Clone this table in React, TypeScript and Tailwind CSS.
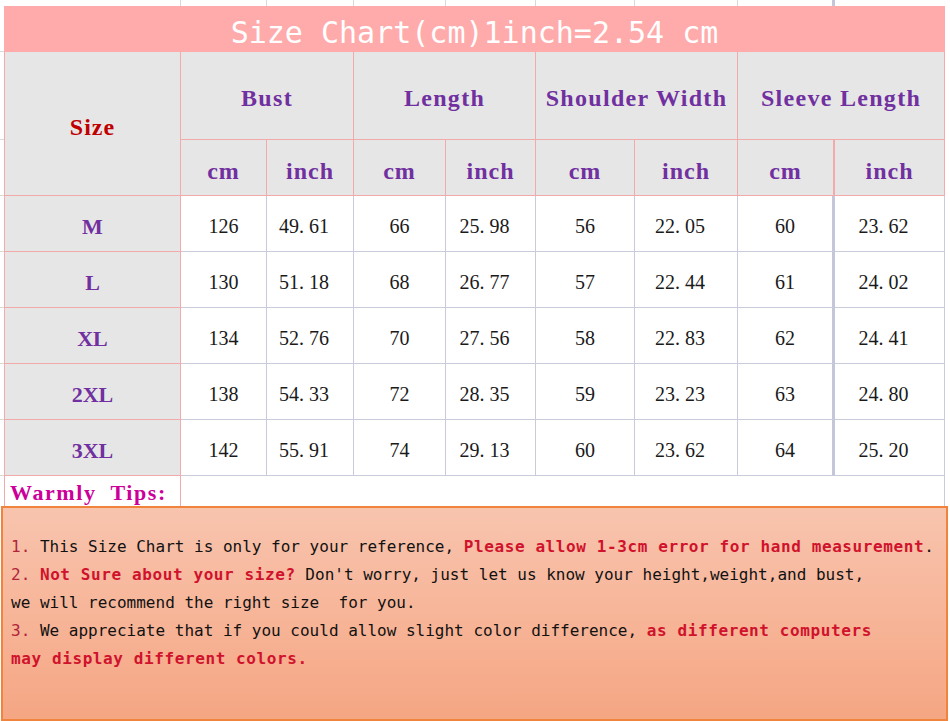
const rows = [
  { size: "M", v: ["126", "49.61", "66", "25.98", "56", "22.05", "60", "23.62"] },
  { size: "L", v: ["130", "51.18", "68", "26.77", "57", "22.44", "61", "24.02"] },
  { size: "XL", v: ["134", "52.76", "70", "27.56", "58", "22.83", "62", "24.41"] },
  { size: "2XL", v: ["138", "54.33", "72", "28.35", "59", "23.23", "63", "24.80"] },
  { size: "3XL", v: ["142", "55.91", "74", "29.13", "60", "23.62", "64", "25.20"] },
];

const groups = ["Bust", "Length", "Shoulder Width", "Sleeve Length"];

// numbers are drawn with a half-width period, like the original sheet font
function Num({ text }: { text: string }) {
  const [a, b] = text.split(".");
  if (b === undefined) return <span>{a}</span>;
  return (
    <span className="pr-[12px]">
      {a}
      <span className="inline-block w-[10px]">.</span>
      {b}
    </span>
  );
}

export default function App() {
  return (
    <div className="w-[950px] h-[721px] bg-white overflow-hidden font-['Liberation_Serif',serif]">
      {/* spreadsheet strip above the chart */}
      <div className="flex h-[6px] pl-[4px]">
        <div className="w-[177px] border-r border-[#d9d9d9]" />
        <div className="w-[86px] border-r border-[#d9d9d9]" />
        <div className="w-[87px] border-r border-[#d9d9d9]" />
        <div className="w-[92px] border-r border-[#d9d9d9]" />
        <div className="w-[90px] border-r border-[#d9d9d9]" />
        <div className="w-[99px] border-r border-[#d9d9d9]" />
        <div className="w-[103px] border-r border-[#d9d9d9]" />
        <div className="w-[97px] border-r-[3px] border-[#c3c7d9]" />
      </div>

      <div className="flex">
        {/* left margin grid lines */}
        <div className="w-[4px] flex flex-col">
          <div className="h-[46px] border-b border-[#d9d9d9]" />
          <div className="h-[88px] border-b border-[#d9d9d9]" />
          <div className="h-[56px] border-b border-[#d9d9d9]" />
          <div className="h-[56px] border-b border-[#d9d9d9]" />
          <div className="h-[56px] border-b border-[#d9d9d9]" />
          <div className="h-[56px] border-b border-[#d9d9d9]" />
          <div className="h-[56px] border-b border-[#d9d9d9]" />
          <div className="h-[56px] border-b border-[#d9d9d9]" />
        </div>

        <div className="w-[941px]">
          {/* title */}
          <div className="h-[46px] bg-[#ffabab] flex items-center justify-center pt-[6px] text-white text-[30px] font-['DejaVu_Sans_Mono',monospace] whitespace-pre">
            Size Chart(cm)1inch=2.54 cm
          </div>

          <div className="grid grid-cols-[177px_86px_87px_92px_90px_99px_103px_97px_110px]">
            <div className="row-span-2 bg-[#e7e6e6] border-l border-r border-b border-[#f2aaaa] flex items-center justify-center pt-[6px] text-[#c00000] font-bold text-[24px] tracking-[1px]">
              Size
            </div>
            {groups.map((g) => (
              <div
                key={g}
                className="col-span-2 h-[88px] bg-[#e7e6e6] border-r border-b border-[#f2aaaa] flex items-center justify-center pt-[4px] text-[#7030a0] font-bold text-[24px] tracking-[1.3px] whitespace-nowrap"
              >
                {g}
              </div>
            ))}
            {groups.map((g, i) => (
              <div key={g} className="contents">
                <div
                  className={`h-[56px] bg-[#e7e6e6] border-b border-[#f2aaaa] flex items-center justify-center pt-[6px] text-[#7030a0] font-bold text-[24px] tracking-[1px] ${
                    i === 3 ? "border-r-2" : "border-r"
                  }`}
                >
                  cm
                </div>
                <div className="h-[56px] bg-[#e7e6e6] border-r border-b border-[#f2aaaa] flex items-center justify-center pt-[6px] text-[#7030a0] font-bold text-[24px] tracking-[1px]">
                  inch
                </div>
              </div>
            ))}

            {rows.map((r) => (
              <div key={r.size} className="contents">
                <div className="h-[56px] bg-[#e7e6e6] border-l border-r border-b border-[#f2aaaa] flex items-center justify-center pt-[6px] text-[#7030a0] font-bold text-[22px]">
                  {r.size}
                </div>
                {r.v.map((v, i) => (
                  <div
                    key={i}
                    className={`h-[56px] border-b border-[#c9cbdb] flex items-center justify-center pt-[4px] text-[#1a1a1a] text-[20px] ${
                      i === 6 ? "border-r-[3px] border-r-[#c3c7d9]" : "border-r"
                    }`}
                  >
                    <Num text={v} />
                  </div>
                ))}
              </div>
            ))}

            <div className="h-[30px] border-l border-r border-[#f2aaaa] flex items-center pl-[5px] pt-[4px] text-[#cc0099] font-bold text-[22px] tracking-[1.6px] whitespace-pre leading-none">
              Warmly  Tips:
            </div>
            <div className="col-span-8 h-[30px] border-r border-[#c9cbdb]" />
          </div>
        </div>
      </div>

      {/* warm tips box */}
      <div className="ml-[1px] w-[947px] h-[215px] border-2 border-[#f0843c] bg-gradient-to-b from-[#f8c4ae] to-[#f5a683] pt-[25px] pl-[8px] text-[16px] leading-[28px] text-[#111] font-['DejaVu_Sans_Mono',monospace] whitespace-pre">
        <div>
          <span className="text-[#b0243a]">1.</span> This Size Chart is only for your reference,{" "}
          <span className="text-[#d0122c] font-bold tracking-[0.6px]">
            Please allow 1-3cm error for hand measurement
          </span>
          .
        </div>
        <div>
          <span className="text-[#b0243a]">2.</span>{" "}
          <span className="text-[#d0122c] font-bold tracking-[0.6px]">Not Sure about your size?</span> Don't worry, just let us know your height,weight,and bust,
        </div>
        <div>we will recommend the right size  for you.</div>
        <div>
          <span className="text-[#b0243a]">3.</span> We appreciate that if you could allow slight color difference,{" "}
          <span className="text-[#d0122c] font-bold tracking-[0.6px]">as different computers</span>
        </div>
        <div className="text-[#d0122c] font-bold tracking-[0.6px]">may display different colors.</div>
      </div>
    </div>
  );
}
